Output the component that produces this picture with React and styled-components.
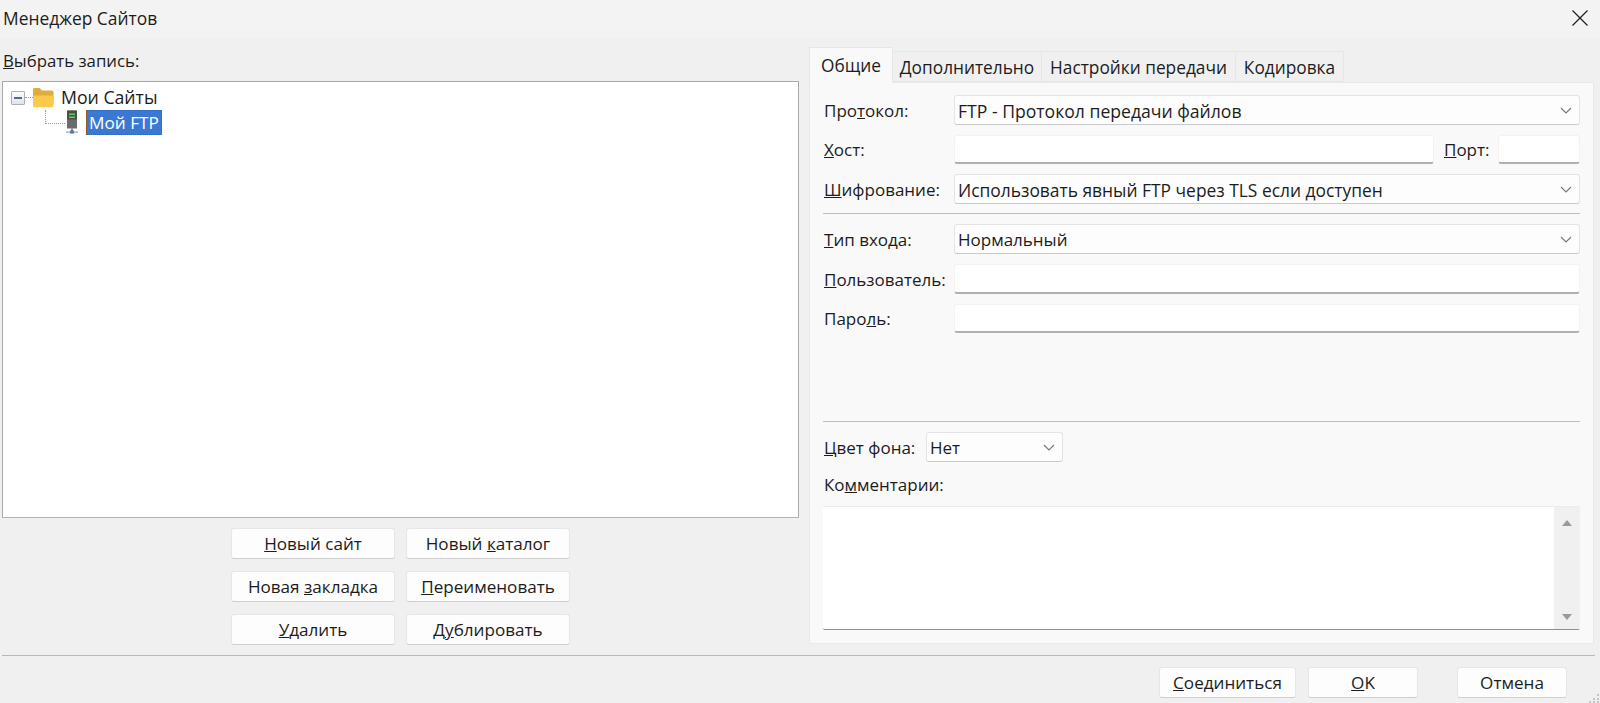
import React from 'react'
import styled, { createGlobalStyle } from 'styled-components'

const GlobalStyle = createGlobalStyle`
  html, body { margin: 0; padding: 0; background: #f0f0f0; }
  body {
    width: 1600px;
    height: 703px;
    overflow: hidden;
    font-family: "Open Sans", "Noto Sans", sans-serif;
    font-size: 17px;
    color: #1c1c1c;
  }
  * { box-sizing: border-box; }
`

const Dialog = styled.div`
  position: relative;
  width: 1600px;
  height: 703px;
  display: flex;
  flex-direction: column;
`

const TitleBar = styled.div`
  height: 38px;
  flex: none;
  background: #f3f3f3;
  display: flex;
  align-items: center;
  justify-content: space-between;
  padding: 0 12px 2px 3px;
  font-size: 17.4px;
`

const CloseIcon = styled.svg`
  width: 16px;
  height: 16px;
  display: block;
`

const Body = styled.div`
  height: 617px;
  flex: none;
  display: flex;
  padding-left: 2px;
`

const LeftPane = styled.div`
  width: 797px;
  flex: none;
  display: flex;
  flex-direction: column;
`

const PaneLabel = styled.div`
  height: 43px;
  flex: none;
  display: flex;
  align-items: center;
  padding: 2px 0 0 1px;
  font-size: 16.8px;
`

const TreeBox = styled.div`
  height: 437px;
  flex: none;
  background: #fff;
  border: 1px solid #a8a8a8;
  border-bottom-color: #b4b4b4;
  padding-top: 3px;
  font-size: 17.7px;
`

const TreeRow = styled.div`
  display: flex;
  align-items: center;
  height: ${p => p.$height}px;
  padding-left: ${p => p.$indent}px;
`

const Expander = styled.div`
  width: 14px;
  height: 14px;
  flex: none;
  border: 1px solid #b0b0b0;
  border-radius: 1px;
  background: linear-gradient(#fcfcfc, #e2e2ea);
  display: flex;
  align-items: center;
  justify-content: center;
  &::before {
    content: "";
    width: 8px;
    height: 2px;
    background: #4a6aa8;
  }
`

const Connector = styled.div`
  width: 8px;
  flex: none;
  border-top: 1px dotted #999;
`

const Elbow = styled.div`
  width: 20px;
  height: 14px;
  flex: none;
  align-self: flex-start;
  border-left: 1px dotted #999;
  border-bottom: 1px dotted #999;
`

const TreeText = styled.span`
  margin-left: 7px;
  padding-bottom: 2px;
`

const SelectedText = styled.span`
  margin-left: 7px;
  height: 25px;
  display: flex;
  align-items: center;
  padding: 0 2px;
  background: #3a78d2;
  color: #fff;
  border: 1px dotted #9a4f1a;
  font-size: 17.2px;
`

const ButtonGrid = styled.div`
  margin-top: 10px;
  display: grid;
  grid-template-columns: 164px 164px;
  grid-auto-rows: 31px;
  gap: 12px 11px;
  justify-content: center;
`

const Button = styled.button`
  width: ${p => (p.$width ? `${p.$width}px` : '100%')};
  height: 31px;
  margin-left: ${p => p.$gap || 0}px;
  padding: 0;
  background: #fdfdfd;
  border: 1px solid #e6e6e6;
  border-bottom-color: #cfcfcf;
  border-radius: 3px;
  font: inherit;
  font-size: 17.1px;
  color: inherit;
`

const RightPane = styled.div`
  margin-left: 10px;
  width: 785px;
  flex: none;
  display: flex;
  flex-direction: column;
  padding-top: 9px;
`

const TabRow = styled.div`
  height: 35px;
  flex: none;
  display: flex;
  align-items: flex-end;
  font-size: 17.3px;
`

const Tab = styled.div`
  width: ${p => p.$width}px;
  height: ${p => (p.$active ? 36 : 31)}px;
  margin-bottom: ${p => (p.$active ? -1 : 0)}px;
  display: flex;
  align-items: center;
  justify-content: center;
  padding-bottom: ${p => (p.$active ? 1 : 0)}px;
  padding-top: ${p => (p.$active ? 0 : 1)}px;
  background: ${p => (p.$active ? '#f9f9f9' : '#f0f0f0')};
  border: 1px solid #e6e6e6;
  border-left-width: ${p => (p.$active ? 1 : 0)}px;
  border-bottom-width: ${p => (p.$active ? 0 : 1)}px;
  position: relative;
  z-index: ${p => (p.$active ? 1 : 0)};
`

const TabPanel = styled.div`
  height: 562px;
  flex: none;
  background: #f9f9f9;
  border: 1px solid #e9e9e9;
  padding: 12px 13px 13px 13px;
  display: flex;
  flex-direction: column;
  gap: 10px;
`

const FormRow = styled.div`
  display: flex;
  align-items: center;
  height: ${p => p.$height}px;
  flex: none;
`

const FieldLabel = styled.label`
  width: ${p => p.$width || 131}px;
  flex: none;
  padding-left: 1px;
  white-space: nowrap;
`

const Select = styled.div`
  flex: ${p => (p.$width ? 'none' : 1)};
  width: ${p => (p.$width ? `${p.$width}px` : 'auto')};
  height: 100%;
  display: flex;
  align-items: center;
  justify-content: space-between;
  padding: 1px 7px 0 3px;
  background: #fdfdfd;
  border: 1px solid #e4e4e4;
  border-bottom-color: #cacaca;
  border-radius: 3px;
  font-size: ${p => p.$size || 17}px;
`

const Chevron = styled.svg`
  width: 12px;
  height: 7px;
  flex: none;
`

const TextInput = styled.input`
  flex: ${p => (p.$width ? 'none' : 1)};
  width: ${p => (p.$width ? `${p.$width}px` : 'auto')};
  min-width: 0;
  height: 100%;
  padding: 0;
  background: #fff;
  border: 1px solid #f2f2f2;
  border-bottom: 2px solid #b0b0b0;
  border-radius: 3px;
`

const PortLabel = styled.label`
  width: 64px;
  flex: none;
  padding-left: 10px;
`

const Rule = styled.div`
  height: 1px;
  flex: none;
  margin-top: ${p => p.$pull || 0}px;
  background: #bdbdbd;
`

const Spacer = styled.div`
  flex: 1;
  margin-bottom: -1px;
`

const CommentLabel = styled.label`
  height: 24px;
  flex: none;
  padding-left: 1px;
  line-height: 26px;
`

const CommentBox = styled.div`
  height: 124px;
  flex: none;
  display: flex;
  justify-content: flex-end;
  background: #fff;
  border-top: 1px solid #ececec;
  border-bottom: 1px solid #8f8f8f;
  border-radius: 0 0 2px 2px;
`

const ScrollBar = styled.div`
  width: 26px;
  display: flex;
  flex-direction: column;
  justify-content: space-between;
  align-items: center;
  padding: 13px 0 9px;
  background: #f0f0f0;
`

const ScrollArrow = styled.div`
  width: 0;
  height: 0;
  border-left: 5px solid transparent;
  border-right: 5px solid transparent;
  ${p => (p.$down ? 'border-top: 6px solid #9a9a9a;' : 'border-bottom: 6px solid #9a9a9a;')}
`

const FooterRule = styled.div`
  height: 1px;
  flex: none;
  margin: 0 5px 0 2px;
  background: #b9b9b9;
`

const Footer = styled.div`
  flex: none;
  display: flex;
  justify-content: flex-end;
  padding: 11px 33px 0 0;
`

const Grip = styled.svg`
  position: absolute;
  right: 0;
  bottom: 0;
  width: 11px;
  height: 9px;
`

const FolderIcon = () => (
  <svg width="21" height="21" viewBox="0 0 21 21" style={{ flex: 'none' }}>
    <path d="M0 2.5a1.5 1.5 0 0 1 1.5-1.5h5.2l2.3 2.4h10a1.5 1.5 0 0 1 1.5 1.5v11H0z" fill="#e0ac3c" />
    <path d="M1 8.5h19a1 1 0 0 1 1 1l-.6 9.5a1.4 1.4 0 0 1-1.4 1.2H1.4A1.4 1.4 0 0 1 0 19V9.5a1 1 0 0 1 1-1z" fill="#fac94e" />
  </svg>
)

const ServerIcon = () => (
  <svg width="14" height="25" viewBox="0 0 14 25" style={{ flex: 'none' }}>
    <path d="M3 0.5h8a1 1 0 0 1 1 1v17H2V1.5a1 1 0 0 1 1-1z" fill="#6c6c6c" />
    <path d="M3 0.5h8a1 1 0 0 1 1 1v8H2v-8a1 1 0 0 1 1-1z" fill="#4c504c" />
    <rect x="4" y="3.5" width="6" height="1.5" fill="#62cf62" />
    <rect x="4" y="6.5" width="6" height="1.5" fill="#62cf62" />
    <rect x="6" y="18.5" width="2" height="3" fill="#888" />
    <rect x="1" y="21.5" width="12" height="1.2" fill="#8aa4cc" />
    <rect x="5" y="20.5" width="4" height="3" fill="#4f76b2" />
  </svg>
)

const SelectChevron = () => (
  <Chevron viewBox="0 0 12 7">
    <path d="M1 1l5 5 5-5" fill="none" stroke="#767676" strokeWidth="1.1" />
  </Chevron>
)

export default function App() {
  return (
    <Dialog>
      <GlobalStyle />
      <TitleBar>
        <span>Менеджер Сайтов</span>
        <CloseIcon viewBox="0 0 16 16">
          <path d="M0.5 0.5l15 15M15.5 0.5l-15 15" stroke="#1c1c1c" strokeWidth="1.2" fill="none" />
        </CloseIcon>
      </TitleBar>
      <Body>
        <LeftPane>
          <PaneLabel><span><u>В</u>ыбрать запись:</span></PaneLabel>
          <TreeBox>
            <TreeRow $height={25} $indent={8}>
              <Expander />
              <Connector />
              <FolderIcon />
              <TreeText>Мои Сайты</TreeText>
            </TreeRow>
            <TreeRow $height={25} $indent={42}>
              <Elbow />
              <ServerIcon />
              <SelectedText>Мой FTP</SelectedText>
            </TreeRow>
          </TreeBox>
          <ButtonGrid>
            <Button><u>Н</u>овый сайт</Button>
            <Button>Новый <u>к</u>аталог</Button>
            <Button>Новая <u>з</u>акладка</Button>
            <Button><u>П</u>ереименовать</Button>
            <Button><u>У</u>далить</Button>
            <Button>Д<u>у</u>блировать</Button>
          </ButtonGrid>
        </LeftPane>
        <RightPane>
          <TabRow>
            <Tab $active $width={84}>Общие</Tab>
            <Tab $width={149}>Дополнительно</Tab>
            <Tab $width={194}>Настройки передачи</Tab>
            <Tab $width={108}>Кодировка</Tab>
          </TabRow>
          <TabPanel>
            <FormRow $height={30}>
              <FieldLabel>Про<u>т</u>окол:</FieldLabel>
              <Select $size={17.6}>FTP - Протокол передачи файлов<SelectChevron /></Select>
            </FormRow>
            <FormRow $height={29}>
              <FieldLabel><u>Х</u>ост:</FieldLabel>
              <TextInput readOnly />
              <PortLabel><u>П</u>орт:</PortLabel>
              <TextInput readOnly $width={82} />
            </FormRow>
            <FormRow $height={30}>
              <FieldLabel><u>Ш</u>ифрование:</FieldLabel>
              <Select $size={17.4}>Использовать явный FTP через TLS если доступен<SelectChevron /></Select>
            </FormRow>
            <Rule $pull={-1} />
            <FormRow $height={30}>
              <FieldLabel><u>Т</u>ип входа:</FieldLabel>
              <Select>Нормальный<SelectChevron /></Select>
            </FormRow>
            <FormRow $height={30}>
              <FieldLabel><u>П</u>ользователь:</FieldLabel>
              <TextInput readOnly />
            </FormRow>
            <FormRow $height={29}>
              <FieldLabel>Паро<u>л</u>ь:</FieldLabel>
              <TextInput readOnly />
            </FormRow>
            <Spacer />
            <Rule />
            <FormRow $height={30}>
              <FieldLabel $width={103}><u>Ц</u>вет фона:</FieldLabel>
              <Select $width={137}>Нет<SelectChevron /></Select>
            </FormRow>
            <CommentLabel>Ко<u>м</u>ментарии:</CommentLabel>
            <CommentBox>
              <ScrollBar>
                <ScrollArrow />
                <ScrollArrow $down />
              </ScrollBar>
            </CommentBox>
          </TabPanel>
        </RightPane>
      </Body>
      <FooterRule />
      <Footer>
        <Button $width={137}><u>С</u>оединиться</Button>
        <Button $width={110} $gap={12}><u>O</u>K</Button>
        <Button $width={110} $gap={39}>Отмена</Button>
      </Footer>
      <Grip viewBox="0 0 11 9">
        <g fill="#c4c4c4">
          <rect x="8" y="0" width="2" height="2" />
          <rect x="4" y="4" width="2" height="2" />
          <rect x="8" y="4" width="2" height="2" />
          <rect x="0" y="7" width="2" height="2" />
          <rect x="4" y="7" width="2" height="2" />
          <rect x="8" y="7" width="2" height="2" />
        </g>
      </Grip>
    </Dialog>
  )
}
